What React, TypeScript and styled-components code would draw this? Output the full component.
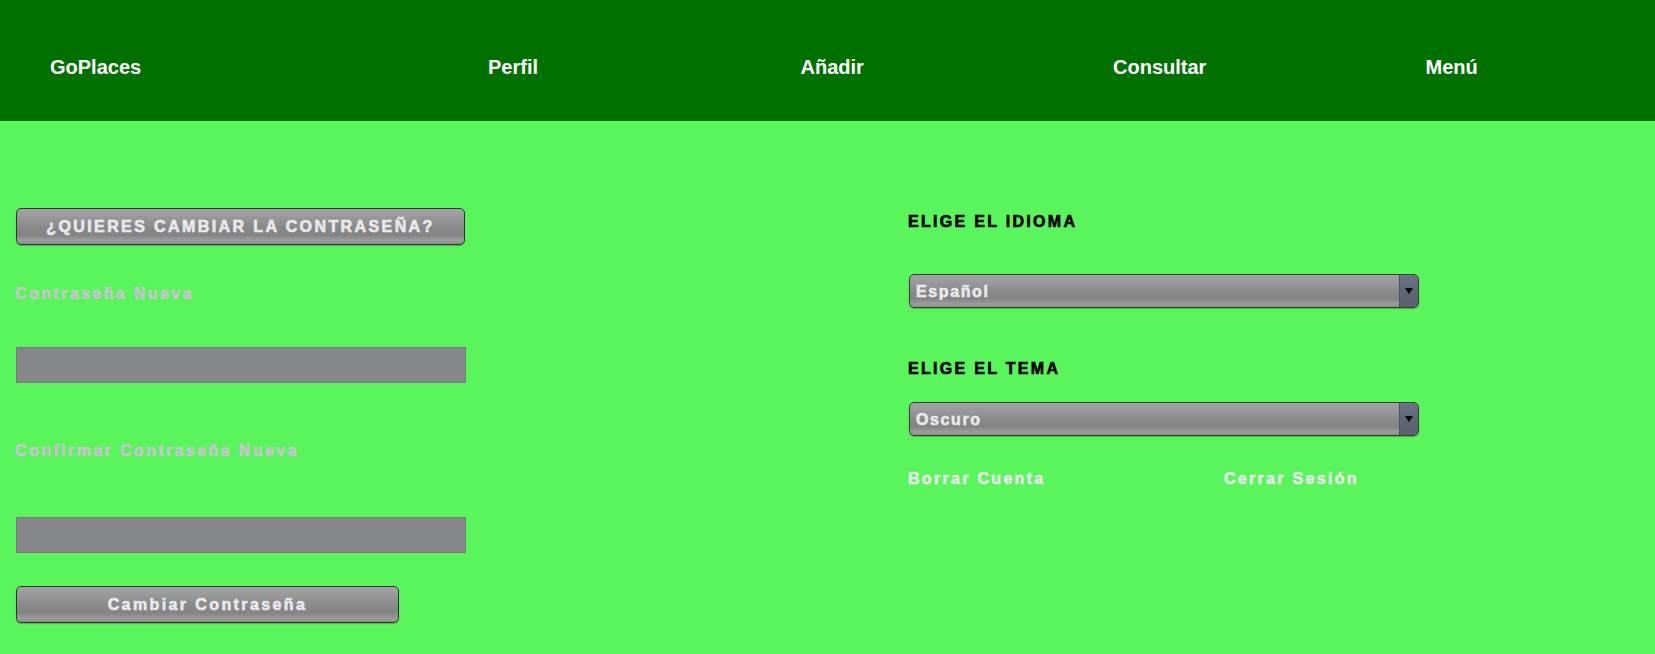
import React from "react";
import styled, { createGlobalStyle } from "styled-components";

const GlobalStyle = createGlobalStyle`
  html, body {
    margin: 0;
    padding: 0;
    background: #5af55d;
    font-family: "Liberation Sans", Arial, sans-serif;
  }
  * { box-sizing: border-box; }
`;

const Page = styled.div`
  min-height: 654px;
  background: #5af55d;
`;

const Header = styled.header`
  height: 121px;
  background: #007000;
  display: flex;
  align-items: center;
  padding: 14px 0 0 50px;
  overflow: hidden;
`;

const Brand = styled.a`
  flex: 0 0 438px;
  color: #ffffff;
  font-weight: 700;
  font-size: 20px;
  text-decoration: none;
`;

const NavItem = styled.a`
  flex: 0 0 312.5px;
  color: #ffffff;
  font-weight: 700;
  font-size: 20px;
  text-decoration: none;
`;

const Main = styled.main`
  display: grid;
  grid-template-columns: 892px 1fr;
  padding-left: 16px;
`;

const Column = styled.section<{ $top: number }>`
  display: flex;
  flex-direction: column;
  align-items: flex-start;
  padding-top: ${(p) => p.$top}px;
`;

const glossy = `
  background: linear-gradient(
    to bottom,
    #a4a4a4 0%,
    #959595 30%,
    #868686 60%,
    #858585 75%,
    #9c9c9c 90%,
    #8c8c8c 100%
  );
`;

const heavy = `
  font-family: "Liberation Sans", Arial, sans-serif;
  font-weight: 700;
  font-size: 16px;
  -webkit-text-stroke: 0.6px currentColor;
`;

const GlossButton = styled.button<{ $w: number; $mt: number }>`
  width: ${(p) => p.$w}px;
  height: 37px;
  margin-top: ${(p) => p.$mt}px;
  ${glossy}
  border: 1px solid #333;
  border-radius: 5px;
  box-shadow: 0 1px 1px rgba(0, 0, 0, 0.25);
  color: #e9e9ee;
  ${heavy}
  letter-spacing: 2.4px;
  text-align: center;
  padding: 0;
  cursor: pointer;
`;

const FieldLabel = styled.label<{ $mt: number }>`
  display: block;
  margin: ${(p) => p.$mt}px 0 0 -1px;
  color: #c8c4ce;
  ${heavy}
  line-height: 20px;
  letter-spacing: 2.4px;
`;

const TextInput = styled.input<{ $mt: number }>`
  width: 450px;
  height: 36px;
  margin-top: ${(p) => p.$mt}px;
  background: #868789;
  border: 1px solid #78797b;
  outline: none;
  padding: 0 8px;
`;

const Heading = styled.h3<{ $mt: number }>`
  margin: ${(p) => p.$mt}px 0 0 0;
  color: #000;
  ${heavy}
  line-height: 20px;
  letter-spacing: 2.3px;
  text-transform: uppercase;
`;

const SelectBox = styled.div<{ $mt: number }>`
  display: flex;
  width: 510px;
  height: 34px;
  margin: ${(p) => p.$mt}px 0 0 1px;
  ${glossy}
  border: 1px solid #3a3a3a;
  border-radius: 5px;
  box-shadow: 0 1px 1px rgba(0, 0, 0, 0.25);
  overflow: hidden;
`;

const NativeSelect = styled.select`
  flex: 1;
  appearance: none;
  -webkit-appearance: none;
  background: transparent;
  border: none;
  outline: none;
  padding: 0 0 0 6px;
  color: #e9e9ee;
  ${heavy}
  letter-spacing: 1.6px;
`;

const ArrowBox = styled.div`
  width: 19px;
  display: flex;
  align-items: center;
  justify-content: center;
  border-left: 1px solid #4b5260;
  background: linear-gradient(to bottom, #6d7482 0%, #5f6674 50%, #5a6170 100%);
`;

const Links = styled.div`
  display: grid;
  grid-template-columns: 316px auto;
  margin-top: 33px;
`;

const TextLink = styled.a`
  color: #e6e6e8;
  ${heavy}
  line-height: 20px;
  letter-spacing: 2.3px;
  text-decoration: none;
  cursor: pointer;
`;

const Triangle = () => (
  <svg width="8" height="6" viewBox="0 0 8 6">
    <path d="M0 0 H8 L4 6 Z" fill="#000" />
  </svg>
);

export default function App() {
  return (
    <Page>
      <GlobalStyle />
      <Header>
        <Brand>GoPlaces</Brand>
        <NavItem>Perfil</NavItem>
        <NavItem>Añadir</NavItem>
        <NavItem>Consultar</NavItem>
        <NavItem>Menú</NavItem>
      </Header>
      <Main>
        <Column $top={87}>
          <GlossButton $w={449} $mt={0}>¿QUIERES CAMBIAR LA CONTRASEÑA?</GlossButton>
          <FieldLabel $mt={39}>Contraseña Nueva</FieldLabel>
          <TextInput type="password" $mt={43} />
          <FieldLabel $mt={58}>Confirmar Contraseña Nueva</FieldLabel>
          <TextInput type="password" $mt={56} />
          <GlossButton $w={383} $mt={33}>Cambiar Contraseña</GlossButton>
        </Column>
        <Column $top={91}>
          <Heading $mt={0}>Elige el idioma</Heading>
          <SelectBox $mt={42}>
            <NativeSelect defaultValue="es">
              <option value="es">Español</option>
              <option value="en">English</option>
            </NativeSelect>
            <ArrowBox>
              <Triangle />
            </ArrowBox>
          </SelectBox>
          <Heading $mt={51}>Elige el tema</Heading>
          <SelectBox $mt={23}>
            <NativeSelect defaultValue="dark">
              <option value="dark">Oscuro</option>
              <option value="light">Claro</option>
            </NativeSelect>
            <ArrowBox>
              <Triangle />
            </ArrowBox>
          </SelectBox>
          <Links>
            <TextLink>Borrar Cuenta</TextLink>
            <TextLink>Cerrar Sesión</TextLink>
          </Links>
        </Column>
      </Main>
    </Page>
  );
}
